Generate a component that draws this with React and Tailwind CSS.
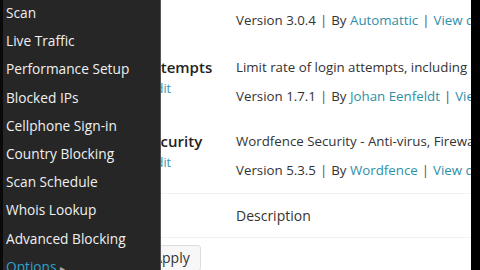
const menu = [
  "Scan",
  "Live Traffic",
  "Performance Setup",
  "Blocked IPs",
  "Cellphone Sign-in",
  "Country Blocking",
  "Scan Schedule",
  "Whois Lookup",
  "Advanced Blocking",
];

const Sep = () => <span className="mx-[4px] text-[#555]">|</span>;

const PluginRow = ({ name, desc, version, author, more, className }) => (
  <div className={`flex ${className}`}>
    <div className="w-[236px] shrink-0">
      <div className="pl-[61px] font-semibold text-[#222] text-[15px] leading-[20px] whitespace-nowrap">{name}</div>
      <div className="mt-[2px] w-[171px] text-right text-[12.5px] leading-[20px] text-[#3e95ad] whitespace-nowrap">
        Deactivate | Edit
      </div>
    </div>
    <div className="whitespace-nowrap">
      <div className="leading-[20px]">{desc}</div>
      <div className="mt-[9px] leading-[20px]">
        Version {version}
        <Sep />
        By <span className="text-[#2e8fa8]">{author}</span>
        <Sep />
        <span className="text-[#2e8fa8]">{more}</span>
      </div>
    </div>
  </div>
);

export default function App() {
  return (
    <div className="relative w-[480px] h-[270px] overflow-hidden bg-white font-['Open_Sans',sans-serif] text-[13.3px] text-[#333]">
      <div className="flex h-full">
        <div className="flex-1 overflow-hidden">
          {/* row 1, mostly scrolled off */}
          <div className="flex h-[44px] pt-[10px]">
            <div className="w-[236px] shrink-0" />
            <div className="whitespace-nowrap leading-[20px]">
              Version 3.0.4
              <Sep />
              By <span className="text-[#2e8fa8]">Automattic</span>
              <Sep />
              <span className="text-[#2e8fa8]">View details</span>
            </div>
          </div>
          <PluginRow
            className="h-[74px] pt-[13px]"
            name="Limit Login Attempts"
            desc="Limit rate of login attempts, including by way of cookies"
            version="1.7.1"
            author="Johan Eenfeldt"
            more="View details"
          />
          <PluginRow
            className="h-[76px] pt-[13px] border-b border-[#f1f1f1]"
            name="Wordfence Security"
            desc="Wordfence Security - Anti-virus, Firewall and High Speed Cache"
            version="5.3.5"
            author="Wordfence"
            more="View details"
          />
          <div className="flex h-[44px] items-center border-b border-[#f1f1f1]">
            <div className="w-[236px] shrink-0" />
            <div className="text-[14px]">Description</div>
          </div>
          <div className="pt-[7px] pl-[110px]">
            <button className="h-[26px] px-[10px] border border-[#ddd] rounded-[3px] bg-[#f7f7f7] text-[14px] leading-[24px] text-[#333]">
              Bulk Apply
            </button>
          </div>
        </div>
        <div className="w-[9px] shrink-0 bg-black" />
      </div>

      {/* flyout menu over the content */}
      <div className="absolute left-0 top-0 h-full w-[161px] bg-[#262626] border-l-[3px] border-[#0a0a0a] border-r border-r-[#555]">
        <ul className="pl-[3px] pt-[3px]">
          {menu.map((m) => (
            <li key={m} className="h-[28.2px] leading-[20px] text-[13.7px] text-[#f0f0f0] whitespace-nowrap">
              {m}
            </li>
          ))}
          <li className="h-[28px] leading-[20px] text-[13.7px] text-[#2ea2cc]">
            Options <span className="text-[#aaa] text-[10px]">▸</span>
          </li>
        </ul>
      </div>
    </div>
  );
}
